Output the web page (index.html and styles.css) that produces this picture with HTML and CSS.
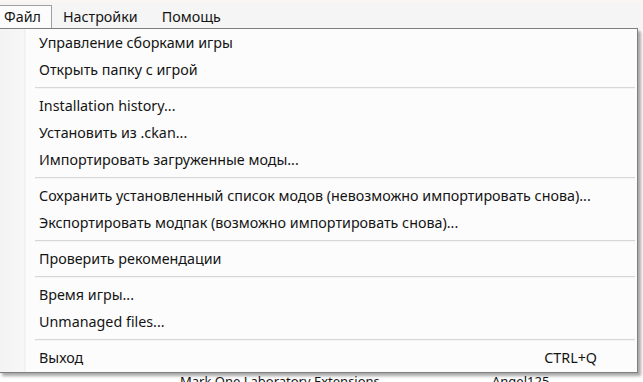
FILE: index.html
```html
<!DOCTYPE html>
<html lang="ru">
<head>
    <meta charset="UTF-8">
    <meta name="viewport" content="width=device-width, initial-scale=1.0">
    <title>CKAN</title>
    <link rel="stylesheet" href="styles.css">
</head>
<body>

    <div class="window">
        <!-- Menu bar -->
        <div class="menu-bar">
            <div class="menu-tab active">Файл</div>
            <div class="menu-tab">Настройки</div>
            <div class="menu-tab">Помощь</div>
        </div>

        <!-- Mod list behind the menu -->
        <div class="content">
            <div class="mod-row">
                <span class="mod-name">Mark One Laboratory Extensions</span>
                <span class="mod-author">Angel125</span>
            </div>
        </div>

        <!-- File dropdown -->
        <div class="dropdown">
            <div class="dropdown-item">Управление сборками игры</div>
            <div class="dropdown-item">Открыть папку с игрой</div>
            <div class="separator"></div>
            <div class="dropdown-item">Installation history...</div>
            <div class="dropdown-item">Установить из .ckan...</div>
            <div class="dropdown-item">Импортировать загруженные моды...</div>
            <div class="separator"></div>
            <div class="dropdown-item">Сохранить установленный список модов (невозможно импортировать снова)...</div>
            <div class="dropdown-item">Экспортировать модпак (возможно импортировать снова)...</div>
            <div class="separator"></div>
            <div class="dropdown-item">Проверить рекомендации</div>
            <div class="separator"></div>
            <div class="dropdown-item">Время игры...</div>
            <div class="dropdown-item">Unmanaged files...</div>
            <div class="separator"></div>
            <div class="dropdown-item">
                <span>Выход</span>
                <span class="shortcut">CTRL+Q</span>
            </div>
        </div>
    </div>

</body>
</html>
```

FILE: styles.css
```css
/* Basic Reset */
* {
    margin: 0;
    padding: 0;
    box-sizing: border-box;
}

body {
    font-family: 'Noto Sans', 'Segoe UI', sans-serif;
    font-size: 14.3px;
    color: #141414;
    background-color: #ffffff;
    overflow: hidden;
}

.window {
    position: relative;
    width: 643px;
    height: 382px;
    display: flex;
    flex-direction: column;
}

/* Menu bar */
.menu-bar {
    height: 29px;
    display: flex;
    align-items: flex-end;
    background-color: #f5f5f5;
    border-top: 2px solid #f9f6f3;
}

.menu-tab {
    height: 24px;
    line-height: 22px;
    padding: 0 11px;
    border: 1px solid transparent;
    border-bottom: none;
}

.menu-tab.active {
    margin-left: -1px;
    margin-right: -1px;
    padding: 0 10px 0 4px;
    background-color: #fcfcfc;
    border-color: #a0a0a0;
}

/* Content under the menu */
.content {
    flex: 1;
    display: flex;
    flex-direction: column;
    justify-content: flex-end;
    background-color: #ffffff;
}

.mod-row {
    display: flex;
    height: 10px;
    overflow: hidden;
    padding-left: 180px;
    font-size: 13px;
}

.mod-name {
    width: 312px;
    line-height: 22px;
    margin-top: -2px;
}

.mod-author {
    line-height: 22px;
    margin-top: -2px;
}

/* Dropdown */
.dropdown {
    position: absolute;
    top: 28px;
    left: -1px;
    width: 639px;
    padding: 0 2px 1px 0;
    background-color: #fcfcfc;
    border: 1px solid #7f7f7f;
    box-shadow: 3px 3px 3px rgba(0, 0, 0, 0.35);
    background-image: linear-gradient(to right, #f3f3f3 0, #f7f7f7 24px, #ececec 25px, #fcfcfc 26px);
}

.dropdown-item {
    height: 27px;
    display: flex;
    align-items: center;
    justify-content: space-between;
    padding: 0 38px 0 39px;
    white-space: nowrap;
}

.shortcut {
    color: #141414;
}

.separator {
    height: 9px;
    margin-left: 35px;
    display: flex;
    align-items: center;
}

.separator::before {
    content: '';
    flex: 1;
    height: 1px;
    background-color: #d7d7d7;
    border-bottom: 1px solid #f4f4f4;
}
```
